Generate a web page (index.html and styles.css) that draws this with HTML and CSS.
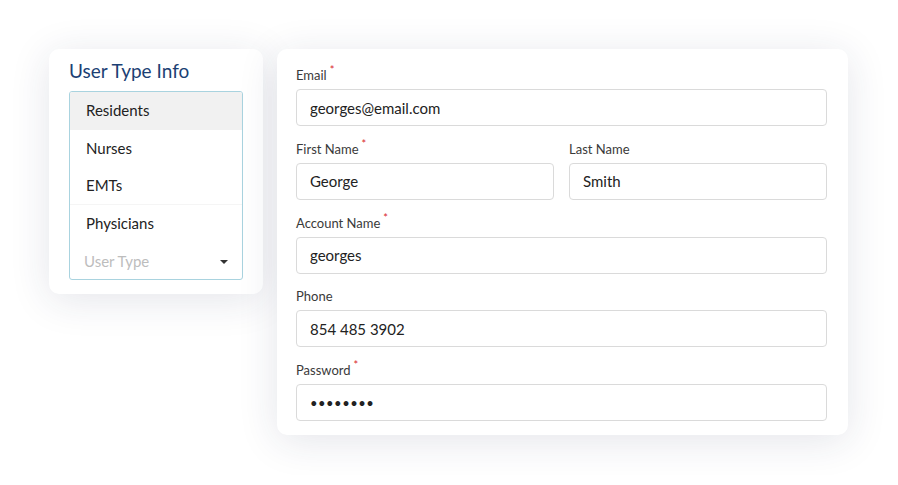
FILE: index.html
```html
<!DOCTYPE html>
<html lang="en">
<head>
    <meta charset="UTF-8">
    <meta name="viewport" content="width=device-width, initial-scale=1.0">
    <link rel="stylesheet" href="styles.css">
</head>
<body>

<div class="stage">

    <!-- User type picker -->
    <div class="card type-card">
        <h2 class="type-title">User Type Info</h2>
        <div class="type-list">
            <div class="type-option selected">Residents</div>
            <div class="type-option">Nurses</div>
            <div class="type-option divided">EMTs</div>
            <div class="type-option">Physicians</div>
            <div class="type-select">
                <span>User Type</span>
                <span class="caret"></span>
            </div>
        </div>
    </div>

    <!-- Account form -->
    <form class="card form-card">
        <div class="field">
            <label>Email<sup>*</sup></label>
            <input type="text" value="georges@email.com" readonly>
        </div>
        <div class="field-row">
            <div class="field">
                <label>First Name<sup>*</sup></label>
                <input type="text" value="George" readonly>
            </div>
            <div class="field">
                <label>Last Name</label>
                <input type="text" value="Smith" readonly>
            </div>
        </div>
        <div class="field">
            <label>Account Name<sup>*</sup></label>
            <input type="text" value="georges" readonly>
        </div>
        <div class="field">
            <label>Phone</label>
            <input type="text" value="854 485 3902" readonly>
        </div>
        <div class="field">
            <label>Password<sup>*</sup></label>
            <input type="password" value="password" readonly>
        </div>
    </form>

</div>

</body>
</html>
```

FILE: styles.css
```css
body {
    margin: 0;
    background-color: #ffffff;
    font-family: Lato, "Open Sans", Arial, sans-serif;
    color: #222;
}
.stage {
    display: flex;
    align-items: flex-start;
    gap: 14px;
    padding: 49px 0 40px 49px;
}
.card {
    background-color: #ffffff;
    border-radius: 10px;
    box-shadow: 0 6px 40px rgba(30, 40, 80, 0.12);
}

/* left card */
.type-card {
    width: 214px;
    box-sizing: border-box;
    padding: 10px 20px 14px 20px;
}
.type-title {
    margin: 0 0 8px 0;
    font-size: 19px;
    font-weight: normal;
    line-height: 24px;
    color: #1c3f74;
}
.type-list {
    border: 1px solid #a9d3df;
    border-radius: 3px;
    overflow: hidden;
}
.type-option {
    height: 37.6px;
    line-height: 37.6px;
    padding-left: 16px;
    font-size: 15px;
    color: #222;
    box-sizing: border-box;
}
.type-option.selected {
    background-color: #f1f1f1;
}
.type-option.divided {
    border-bottom: 1px solid #f5f5f5;
}
.type-select {
    height: 37px;
    display: flex;
    align-items: center;
    justify-content: space-between;
    padding: 0 14px 0 14px;
    font-size: 15px;
    color: #bdbdbd;
}
.caret {
    width: 0;
    height: 0;
    border-left: 4px solid transparent;
    border-right: 4px solid transparent;
    border-top: 4px solid #333;
    margin-top: 2px;
}

/* right card */
.form-card {
    width: 571px;
    box-sizing: border-box;
    margin: 0;
    padding: 18px 21px 14px 19px;
}
.field {
    display: flex;
    flex-direction: column;
    margin-bottom: 14.75px;
    flex: 1;
}
.form-card > .field:last-child {
    margin-bottom: 0;
}
.field-row {
    display: flex;
    gap: 15px;
}
label {
    font-size: 13px;
    line-height: 16px;
    color: #3a3a3a;
    margin-bottom: 6px;
}
label sup {
    color: #d9262c;
    font-size: 11px;
    line-height: 0;
    margin-left: 3px;
    vertical-align: 6px;
}
input {
    height: 37px;
    box-sizing: border-box;
    border: 1px solid #dadada;
    border-radius: 4px;
    padding: 0 13px;
    font-family: inherit;
    font-size: 15px;
    color: #222;
    background-color: #fff;
    outline: none;
}
input[type="password"] {
    font-size: 13px;
    letter-spacing: 0.5px;
}
```
